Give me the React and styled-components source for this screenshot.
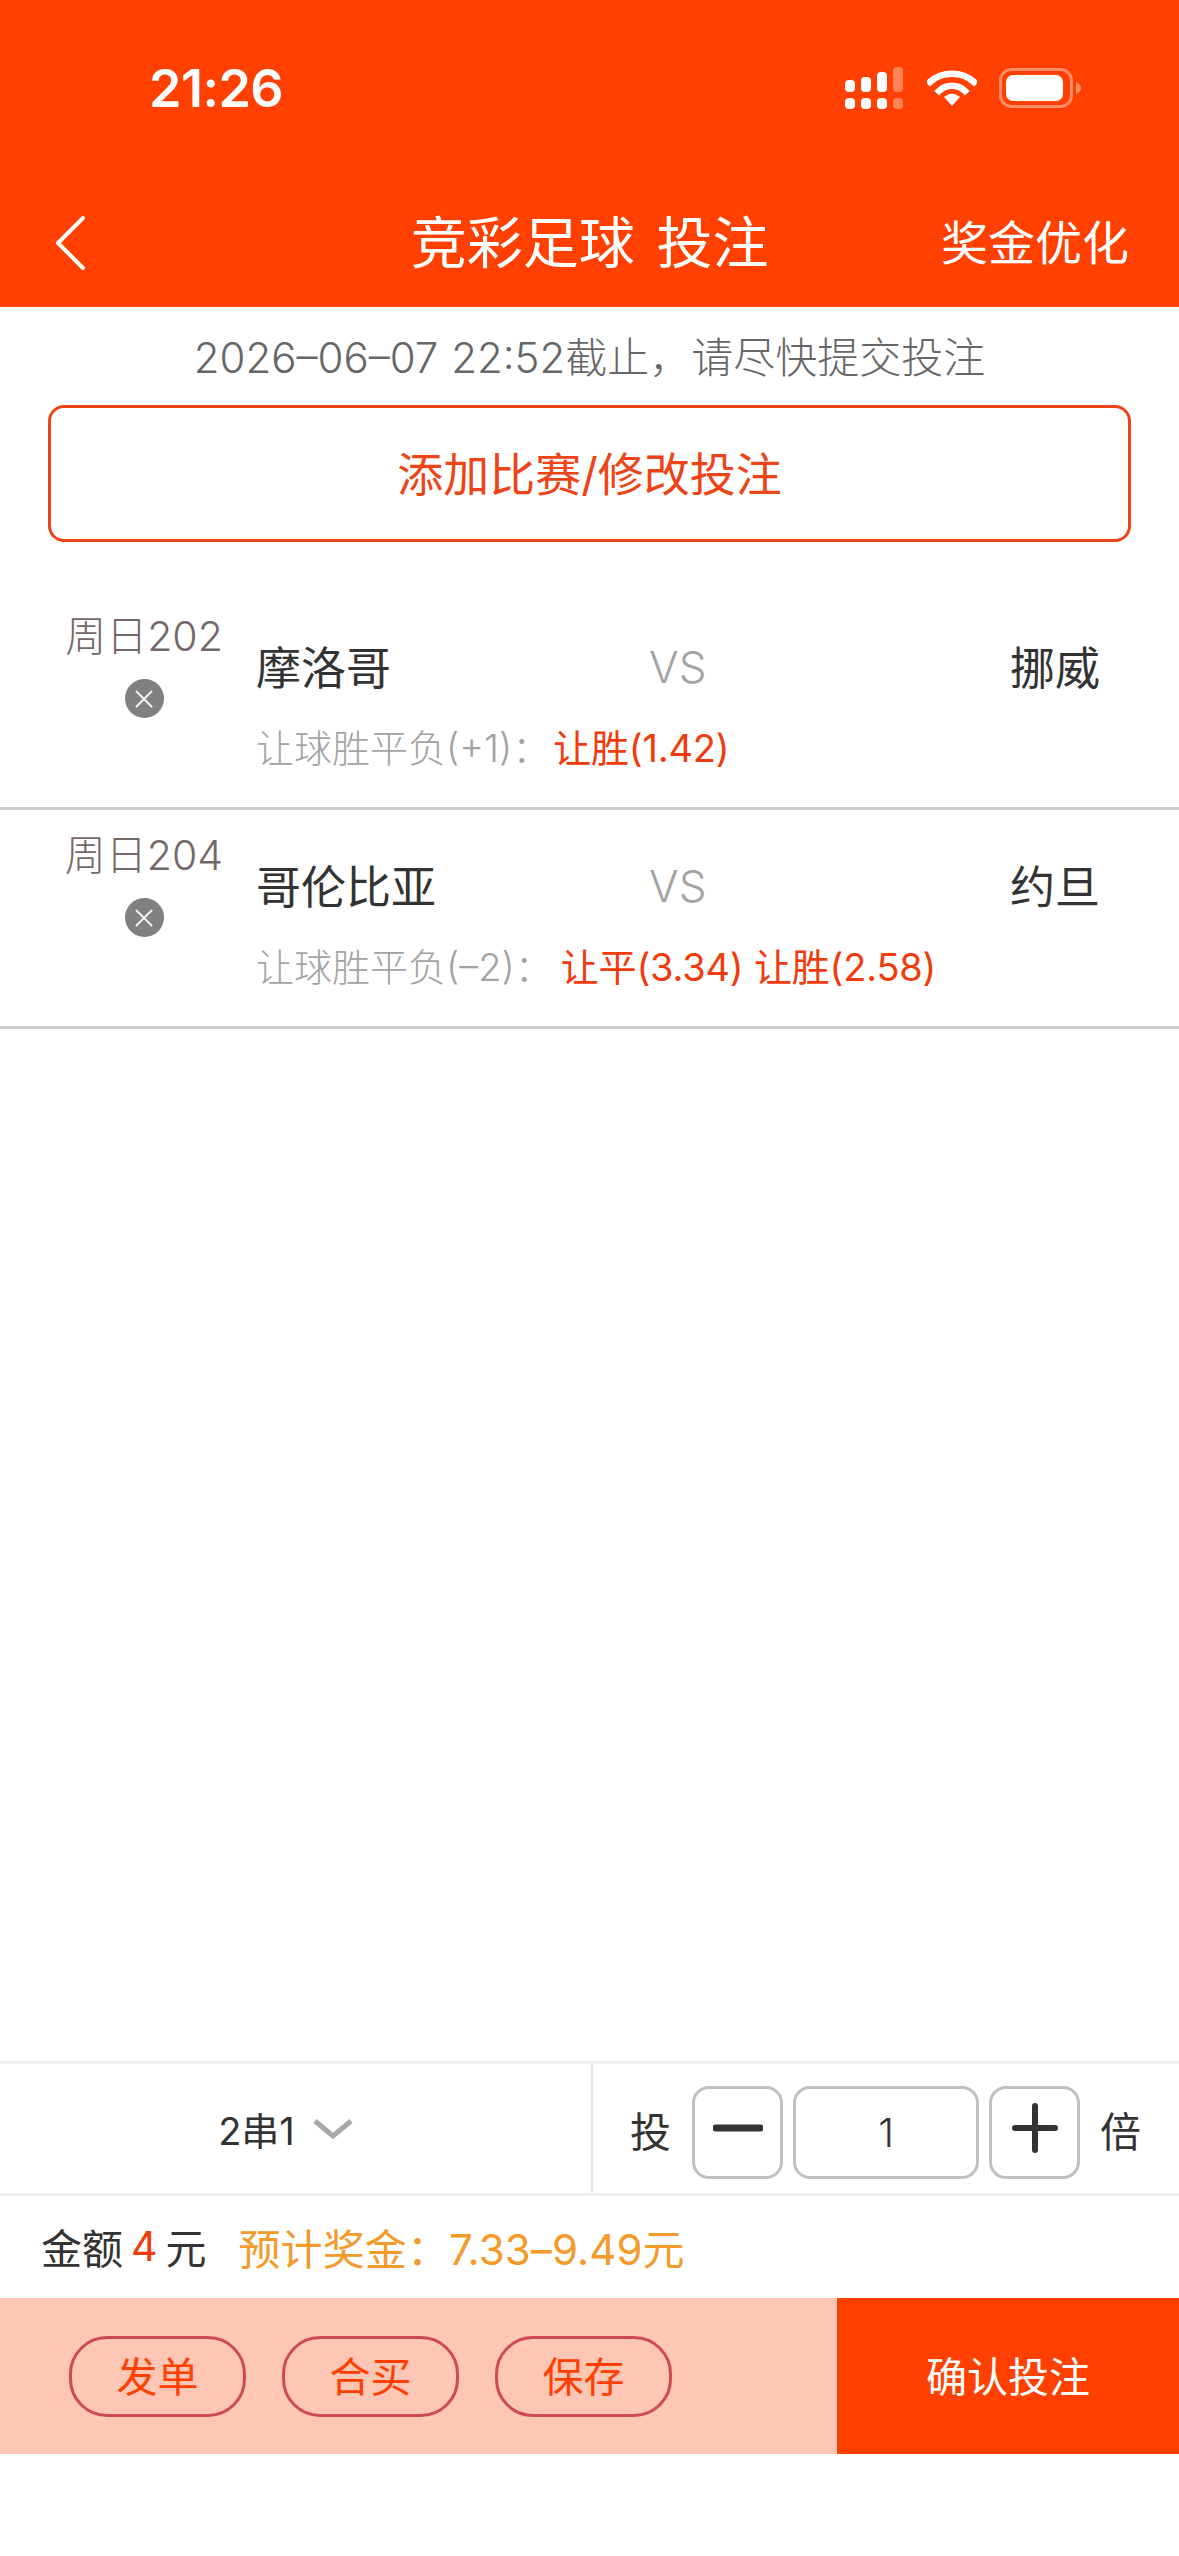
import styled, { createGlobalStyle } from "styled-components";

const ORANGE = "#ff4000";
const FONT = `Inter, "Noto Sans CJK SC", sans-serif`;

const GlobalStyle = createGlobalStyle`
  html, body {
    margin: 0;
    padding: 0;
    background: #fff;
  }
  * {
    box-sizing: border-box;
  }
`;

const Page = styled.div`
  width: 1179px;
  height: 2556px;
  display: flex;
  flex-direction: column;
  background: #fff;
  font-family: ${FONT};
  font-weight: 300;
  overflow: hidden;
`;

const Header = styled.header`
  flex: none;
  height: 307px;
  background: ${ORANGE};
  color: #fff;
`;

const StatusBar = styled.div`
  height: 176px;
  padding: 0 97px 0 149px;
  display: flex;
  align-items: center;
  justify-content: space-between;
`;

const Clock = styled.span`
  font-size: 52px;
  font-weight: 600;
  letter-spacing: -0.5px;
`;

const StatusIcons = styled.div`
  display: flex;
  align-items: center;
  gap: 22px;
`;

const NavBar = styled.nav`
  height: 131px;
  padding: 3px 55px 0;
  display: grid;
  grid-template-columns: 1fr auto 1fr;
  align-items: center;
`;

const Title = styled.h1`
  margin: 0;
  font-size: 56px;
  font-weight: 400;
  line-height: 70px;
  white-space: pre;
  word-spacing: 6px;
`;

const NavAction = styled.span`
  justify-self: end;
  margin-right: -5px;
  font-size: 47px;
  font-weight: 400;
  line-height: 60px;
`;

const Notice = styled.div`
  height: 98px;
  padding-bottom: 4px;
  display: flex;
  align-items: center;
  justify-content: center;
  font-size: 42px;
  word-spacing: 1px;
  color: #666;
`;

const AddButton = styled.button`
  display: block;
  width: 1083px;
  height: 137px;
  margin: 0 48px 49px;
  padding: 0 0 6px;
  background: #fff;
  border: 3px solid #ee4316;
  border-radius: 16px;
  font-family: inherit;
  font-weight: 400;
  font-size: 46px;
  color: #ee4316;
`;

const MatchRow = styled.div`
  height: 219px;
  padding: 21px 79px 0 32px;
  display: flex;
  border-bottom: 3px solid #ccc;
`;

const DateColumn = styled.div`
  flex: none;
  width: 224px;
  display: flex;
  flex-direction: column;
  align-items: center;
`;

const DateLabel = styled.div`
  font-size: 41px;
  line-height: 48px;
  color: #736768;
  white-space: nowrap;
`;

const RemoveBadge = styled.div`
  width: 39px;
  height: 39px;
  margin-top: 19px;
  border-radius: 50%;
  background: #808080;
  display: flex;
  align-items: center;
  justify-content: center;
`;

const MatchBody = styled.div`
  flex: 1;
  padding-top: 21px;
`;

const Teams = styled.div`
  display: grid;
  grid-template-columns: 393px 56px 1fr;
  align-items: center;
  height: 54px;
  font-size: 45px;
  font-weight: 400;
  color: #333;
`;

const Versus = styled.span`
  padding-top: 3px;
  text-align: center;
  font-size: 44px;
  font-weight: 300;
  color: #a3a3a3;
`;

const AwayTeam = styled.span`
  text-align: right;
`;

const BetLine = styled.div`
  display: flex;
  margin-top: 38px;
  font-size: 38px;
  line-height: 46px;
  color: #a3a3a3;
  white-space: pre;
`;

const BetPicks = styled.span`
  margin-left: ${(p) => p.$gap}px;
  font-weight: 400;
  letter-spacing: -0.2px;
  color: #f23b0c;
`;

const Spacer = styled.div`
  flex: 1;
`;

const Footer = styled.footer`
  flex: none;
`;

const OptionsRow = styled.div`
  height: 135px;
  display: flex;
  border-top: 3px solid #eee;
  border-bottom: 3px solid #eee;
`;

const PassType = styled.div`
  flex: none;
  width: 593px;
  padding-right: 20px;
  display: flex;
  align-items: center;
  justify-content: center;
  gap: 18px;
  border-right: 2px solid #e8e8e8;
  font-size: 38px;
  font-weight: 400;
  color: #333;
`;

const Stepper = styled.div`
  flex: 1;
  padding: 0 0 0 37px;
  display: flex;
  align-items: center;
  font-size: 41px;
  font-weight: 400;
  color: #333;
`;

const StepButton = styled.div`
  flex: none;
  width: ${(p) => p.$width}px;
  height: 93px;
  margin: ${(p) => p.$margin};
  border: 3px solid #c0c0c0;
  border-radius: 17px;
  display: flex;
  align-items: center;
  justify-content: center;
  font-size: 40px;
  font-weight: 300;
`;

// the sign sits a little above the middle of its button
const StepSign = styled.div`
  display: flex;
  margin-bottom: 10px;
`;

const AmountRow = styled.div`
  height: 102px;
  padding: 0 0 2px 41px;
  display: flex;
  align-items: center;
  font-size: 41px;
  font-weight: 400;
  color: #333;
  white-space: pre;
`;

const AmountValue = styled.span`
  margin: 0 8px;
  color: #f23b0c;
`;

const Estimate = styled.span`
  margin-left: 32px;
  font-size: 42px;
  letter-spacing: 0.1px;
  color: #f39a2b;
`;

const ActionBar = styled.div`
  height: 156px;
  display: flex;
  background: #fdc6b5;
`;

const ActionGroup = styled.div`
  flex: 1;
  padding-left: 69px;
  display: flex;
  align-items: center;
  gap: 36px;
`;

const PillButton = styled.button`
  width: 177px;
  height: 81px;
  padding: 0 0 5px;
  background: transparent;
  border: 3px solid #cf4a55;
  border-radius: 38px;
  font-family: inherit;
  font-weight: 400;
  font-size: 41px;
  color: ${ORANGE};
`;

const ConfirmButton = styled.button`
  flex: none;
  width: 342px;
  padding: 0 0 5px;
  background: ${ORANGE};
  border: none;
  font-family: inherit;
  font-weight: 400;
  font-size: 41px;
  color: #fff;
`;

const BottomGap = styled.div`
  flex: none;
  height: 102px;
`;

const SignalIcon = () => (
  <svg width="60" height="42" viewBox="0 0 60 42" fill="#fff">
    <rect x="0" y="13" width="10" height="12" rx="4" />
    <rect x="16" y="10" width="10" height="15" rx="4" />
    <rect x="32" y="5" width="10" height="20" rx="4" />
    <rect x="48" y="0" width="10" height="25" rx="4" opacity="0.35" />
    <rect x="0" y="31" width="10" height="11" rx="4" />
    <rect x="16" y="31" width="10" height="11" rx="4" />
    <rect x="32" y="31" width="10" height="11" rx="4" />
    <rect x="48" y="31" width="10" height="11" rx="4" opacity="0.35" />
  </svg>
);

const WifiIcon = () => (
  <svg width="50" height="38" viewBox="0 0 50 38" fill="none">
    <path d="M3 13 C15 2 35 2 47 13" stroke="#fff" strokeWidth="6.5" strokeLinecap="square" />
    <path d="M12 22 C19 15 31 15 38 22" stroke="#fff" strokeWidth="6.5" strokeLinecap="square" />
    <path d="M17 28 C22 23.5 28 23.5 33 28 L25 37 Z" fill="#fff" />
  </svg>
);

const BatteryIcon = () => (
  <svg width="83" height="40" viewBox="0 0 83 40" fill="none">
    <rect x="1.5" y="1.5" width="71" height="37" rx="11" stroke="#fff" strokeOpacity="0.4" strokeWidth="3" />
    <rect x="7" y="7" width="57" height="26" rx="7" fill="#fff" />
    <path d="M77 14 C80 15.5 82 17.5 82 20 C82 22.5 80 24.5 77 26 Z" fill="#fff" fillOpacity="0.4" />
  </svg>
);

const BackIcon = () => (
  <svg width="30" height="54" viewBox="0 0 30 54" fill="none">
    <path d="M28 2 L3 27 L28 52" stroke="#fff" strokeWidth="4" strokeLinecap="round" strokeLinejoin="round" />
  </svg>
);

const CloseIcon = () => (
  <svg width="20" height="20" viewBox="0 0 20 20" fill="none">
    <path d="M2.5 2.5 L17.5 17.5 M17.5 2.5 L2.5 17.5" stroke="#f2f2f2" strokeWidth="2" strokeLinecap="round" />
  </svg>
);

const ChevronIcon = () => (
  <svg width="40" height="20" viewBox="0 0 40 20" fill="none">
    <path d="M2 2 L20 17 L38 2" stroke="#a8a8a8" strokeWidth="5" />
  </svg>
);

const MinusIcon = () => (
  <svg width="50" height="12" viewBox="0 0 50 12" fill="none">
    <path d="M3 6 L47 6" stroke="#333" strokeWidth="7" strokeLinecap="round" />
  </svg>
);

const PlusIcon = () => (
  <svg width="46" height="50" viewBox="0 0 46 50" fill="none">
    <path d="M3 25 L43 25 M23 3 L23 47" stroke="#333" strokeWidth="6" strokeLinecap="round" />
  </svg>
);

const matches = [
  {
    id: "周日202",
    home: "摩洛哥",
    away: "挪威",
    market: "让球胜平负(+1)：",
    picks: "让胜(1.42)",
    gap: 3,
  },
  {
    id: "周日204",
    home: "哥伦比亚",
    away: "约旦",
    market: "让球胜平负(–2)：",
    picks: "让平(3.34) 让胜(2.58)",
    gap: 8,
  },
];

export default function App() {
  return (
    <Page>
      <GlobalStyle />
      <Header>
        <StatusBar>
          <Clock>21:26</Clock>
          <StatusIcons>
            <SignalIcon />
            <WifiIcon />
            <BatteryIcon />
          </StatusIcons>
        </StatusBar>
        <NavBar>
          <BackIcon />
          <Title>竞彩足球 投注</Title>
          <NavAction>奖金优化</NavAction>
        </NavBar>
      </Header>

      <Notice>2026–06–07 22:52截止，请尽快提交投注</Notice>
      <AddButton>添加比赛/修改投注</AddButton>

      {matches.map((m) => (
        <MatchRow key={m.id}>
          <DateColumn>
            <DateLabel>{m.id}</DateLabel>
            <RemoveBadge>
              <CloseIcon />
            </RemoveBadge>
          </DateColumn>
          <MatchBody>
            <Teams>
              <span>{m.home}</span>
              <Versus>VS</Versus>
              <AwayTeam>{m.away}</AwayTeam>
            </Teams>
            <BetLine>
              {m.market}
              <BetPicks $gap={m.gap}>{m.picks}</BetPicks>
            </BetLine>
          </MatchBody>
        </MatchRow>
      ))}

      <Spacer />

      <Footer>
        <OptionsRow>
          <PassType>
            2串1
            <ChevronIcon />
          </PassType>
          <Stepper>
            投
            <StepButton $width={91} $margin="8px 5px 0 21px">
              <StepSign>
                <MinusIcon />
              </StepSign>
            </StepButton>
            <StepButton $width={186} $margin="8px 5px 0">
              1
            </StepButton>
            <StepButton $width={91} $margin="8px 20px 0 5px">
              <StepSign>
                <PlusIcon />
              </StepSign>
            </StepButton>
            倍
          </Stepper>
        </OptionsRow>
        <AmountRow>
          金额
          <AmountValue>4</AmountValue>
          元
          <Estimate>预计奖金：7.33–9.49元</Estimate>
        </AmountRow>
        <ActionBar>
          <ActionGroup>
            <PillButton>发单</PillButton>
            <PillButton>合买</PillButton>
            <PillButton>保存</PillButton>
          </ActionGroup>
          <ConfirmButton>确认投注</ConfirmButton>
        </ActionBar>
        <BottomGap />
      </Footer>
    </Page>
  );
}
